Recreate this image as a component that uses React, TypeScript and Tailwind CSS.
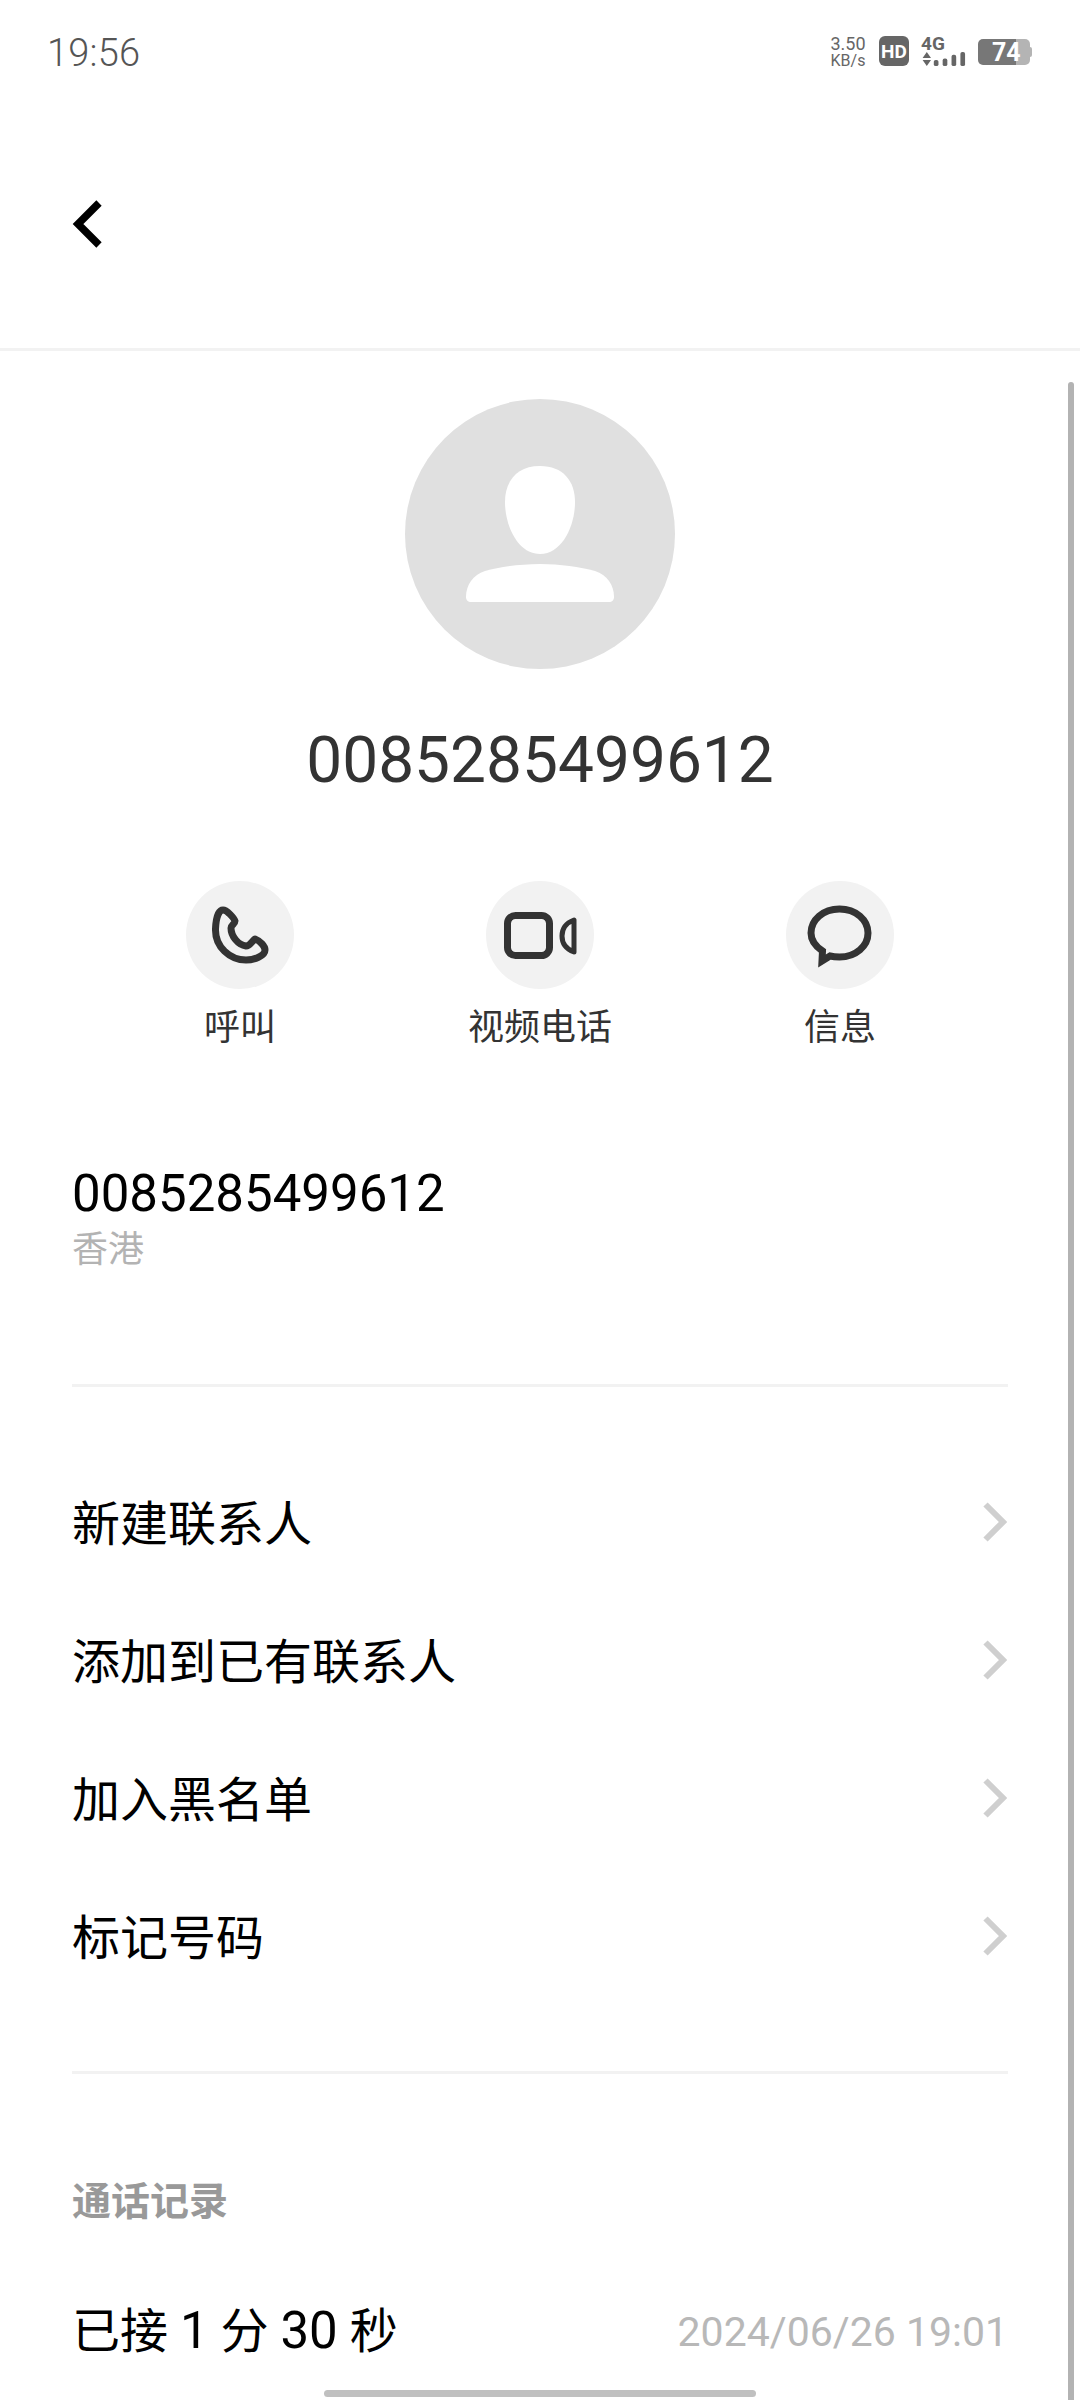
const cjk = 'font-["Roboto","Noto_Sans_CJK_SC",sans-serif]';

function StatusBar() {
  return (
    <div className="flex h-[100px] items-start justify-between pl-[47px] pr-[48px] pt-[36px]">
      <span className="text-[38px] font-light leading-[34px] tracking-[0.2px] text-[#555555]">19:56</span>
      <div className="flex items-start">
        <div className="-mt-[2px] flex w-[40px] flex-col items-center text-[#666666]">
          <span className="text-[18px] leading-[19px]">3.50</span>
          <span className="text-[16px] leading-[16px]">KB/s</span>
        </div>
        <div className="ml-[11px] flex h-[30px] w-[30px] items-center justify-center rounded-[6px] bg-[#666666] text-[19px] font-bold leading-none text-white">
          HD
        </div>
        <div className="ml-[12px] flex h-[30px] flex-col">
          <span className="text-[19px] font-bold leading-[16px] text-[#666666]">4G</span>
          <svg width="48" height="15" viewBox="0 0 48 15">
            <path d="M0 6.5 L4.5 0 L9 6.5Z M0 8.5 L9 8.5 L4.5 15Z" fill="#666666" />
            <rect x="12" y="8.5" width="5" height="6.5" rx="2" fill="#666666" />
            <rect x="21.5" y="7" width="5" height="8" rx="2" fill="#666666" />
            <rect x="31" y="3" width="5" height="12" rx="2" fill="#666666" />
            <rect x="40.5" y="0" width="5" height="15" rx="2" fill="#666666" />
          </svg>
        </div>
        <div className="ml-[9px] mt-[3px] flex h-[26px] w-[52px] items-center rounded-[5px] bg-[linear-gradient(90deg,#777777_38px,#b4b4b4_38px)] pl-[14px]">
          <span className="text-[25px] font-bold leading-none text-white">74</span>
        </div>
        <div className="mt-[11px] h-[10px] w-[2px] rounded-r-[2px] bg-[#b4b4b4]" />
      </div>
    </div>
  );
}

function ActionButton({ label, children }: { label: string; children: React.ReactNode }) {
  return (
    <div className="flex w-[300px] flex-col items-center">
      <div className="flex h-[108px] w-[108px] items-center justify-center rounded-full bg-[#f2f2f2]">
        <svg width="108" height="108" viewBox="0 0 108 108" fill="none">
          {children}
        </svg>
      </div>
      <span className="mt-[18px] text-[36px] leading-[42px] text-[#333333]">{label}</span>
    </div>
  );
}

function MenuRow({ label }: { label: string }) {
  return (
    <div className="flex h-[138px] items-center justify-between">
      <span className="text-[48px] leading-[56px] text-black">{label}</span>
      <svg width="24" height="40" viewBox="0 0 24 40" fill="none" className="mb-[6px] mr-[1px]">
        <path d="M2.5 2.5 L20 20 L2.5 37.5" stroke="#cfcfcf" strokeWidth="6" />
      </svg>
    </div>
  );
}

export default function App() {
  return (
    <div className={`relative h-[2400px] w-[1080px] overflow-hidden bg-white ${cjk}`}>
      <StatusBar />

      {/* header */}
      <div className="flex h-[251px] items-start border-b-[3px] border-[#f2f2f2] pl-[72px] pt-[100px]">
        <svg width="32" height="48" viewBox="0 0 32 48" fill="none">
          <path d="M27 3 L6 24 L27 45" stroke="#000000" strokeWidth="7.5" />
        </svg>
      </div>

      {/* avatar + name */}
      <div className="flex flex-col items-center pt-[48px]">
        <div className="flex h-[270px] w-[270px] items-center justify-center rounded-full bg-[#e0e0e0]">
          <svg width="270" height="270" viewBox="0 0 270 270">
            <path
              d="M135 67 C158 67 170 82 170 103 C170 127 157 155 135 155 C113 155 100 127 100 103 C100 82 112 67 135 67Z"
              fill="#ffffff"
            />
            <path
              d="M135 165 C155 165 175 168 190 172 C202 176 209 186 209 198 C209 201 207 203 204 203 L66 203 C63 203 61 201 61 198 C61 186 68 176 80 172 C95 168 115 165 135 165Z"
              fill="#ffffff"
            />
          </svg>
        </div>
        <span className="mt-[54px] text-[64px] leading-[76px] text-[#333333]">0085285499612</span>
      </div>

      {/* actions */}
      <div className="mt-[82px] flex justify-center">
        <ActionButton label="呼叫">
          <path
            d="M37 29 C33 29 30 36 29.5 48 C29 66 44 79 60 79 C68 79 79 75 79 69 C79 65 74 60 69 58 C66 60 64 65 60 65 C52 64 45 55 45 47 C45 44 49 43 49 40 C48 37 41 29 37 29Z"
            stroke="#333333"
            strokeWidth="7"
            strokeLinejoin="round"
          />
        </ActionButton>
        <ActionButton label="视频电话">
          <rect x="21.5" y="34.5" width="42" height="40" rx="8" stroke="#333333" strokeWidth="7" />
          <path
            d="M88 39 V71 C80 68 76 62 76 55 C76 48 80 42 88 39Z"
            stroke="#333333"
            strokeWidth="5"
            strokeLinejoin="round"
          />
        </ActionButton>
        <ActionButton label="信息">
          <path
            d="M53.5 28 C70 28 82 39 82 52 C82 65 70 76 53.5 76 C49 76 46 75.5 44 75 L36 80 L36.5 70 C29 65 25 59 25 52 C25 39 37 28 53.5 28Z"
            stroke="#333333"
            strokeWidth="7"
            strokeLinejoin="miter"
          />
        </ActionButton>
      </div>

      {/* number */}
      <div className="mx-[72px] mt-[117px] flex h-[221px] flex-col border-b-[3px] border-[#f2f2f2]">
        <span className="text-[51px] leading-[56px] text-black">0085285499612</span>
        <span className="mt-[6px] text-[36px] leading-[44px] text-[#b3b3b3]">香港</span>
      </div>

      {/* menu */}
      <div className="mx-[72px] mt-[69px] flex h-[618px] flex-col border-b-[3px] border-[#f2f2f2]">
        <MenuRow label="新建联系人" />
        <MenuRow label="添加到已有联系人" />
        <MenuRow label="加入黑名单" />
        <MenuRow label="标记号码" />
      </div>

      {/* call log */}
      <div className="mx-[72px] pt-[105px]">
        <div className="text-[39px] font-bold leading-[46px] text-[#999999]">通话记录</div>
        <div className="mt-[78px] flex items-center justify-between">
          <span className="text-[48px] leading-[56px] text-black">
            已接 <span className="text-[51px]">1</span> 分 <span className="text-[51px]">30</span> 秒
          </span>
          <span className="text-[41px] leading-[48px] text-[#b8b8b8]">2024/06/26 19:01</span>
        </div>
      </div>

      {/* scrollbar and home indicator sit over the page */}
      <div className="absolute bottom-0 left-[1068px] top-[382px] w-[6px] rounded-t-[3px] bg-[#b3b3b3]" />
      <div className="absolute left-[324px] top-[2390px] h-[7px] w-[432px] rounded-full bg-[#c0c0c0]" />
    </div>
  );
}
